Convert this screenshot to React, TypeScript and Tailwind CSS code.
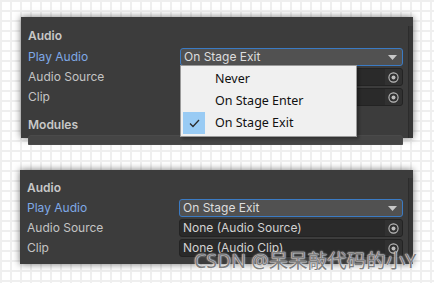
import React from "react";

const font = { fontFamily: "Inter, 'Noto Sans', sans-serif" };

function TargetIcon() {
  return (
    <svg width="11" height="11" viewBox="0 0 11 11">
      <circle cx="5.5" cy="5.5" r="4.6" fill="none" stroke="#bdbdbd" strokeWidth="1.1" />
      <circle cx="5.5" cy="5.5" r="2" fill="#bdbdbd" />
    </svg>
  );
}

function Label({ children, active }: { children: React.ReactNode; active?: boolean }) {
  return (
    <div className={`w-[152px] shrink-0 text-[12px] ${active ? "text-[#7fa9e6]" : "text-[#c4c4c4]"}`}>
      {children}
    </div>
  );
}

function Dropdown({ value, open }: { value: string; open?: boolean }) {
  return (
    <div className="relative flex-1">
      <div className="flex h-[18px] items-center justify-between rounded-[3px] border border-[#3b7bc4] bg-[#515151] pl-[3px] pr-[5px] text-[12px] text-[#dedede]">
        <span>{value}</span>
        <svg width="9" height="5" viewBox="0 0 9 5">
          <path d="M0 0h9L4.5 5z" fill="#c8c8c8" />
        </svg>
      </div>
      {open && <Menu />}
    </div>
  );
}

function ObjectField({ value }: { value: string }) {
  return (
    <div className="flex h-[18px] flex-1 items-center overflow-hidden rounded-[3px] border border-[#232323] bg-[#2a2a2a] text-[12px] text-[#d2d2d2]">
      <span className="flex-1 pl-[3px]">{value}</span>
      <div className="flex h-full w-[17px] items-center justify-center bg-[#313131]">
        <TargetIcon />
      </div>
    </div>
  );
}

function Menu() {
  const items = ["Never", "On Stage Enter", "On Stage Exit"];
  return (
    <div
      className="absolute left-0 top-[17px] z-10 w-[177px] border border-[#9a9a9a] bg-[#f0f0f0] px-[2px] py-[2px] shadow-[2px_2px_3px_rgba(0,0,0,0.3)]"
      style={{ fontFamily: "'Noto Sans', 'Open Sans', sans-serif" }}
    >
      {items.map((it, i) => (
        <div key={it} className="flex h-[22px] items-center">
          <div className={`flex h-[22px] w-[22px] items-center justify-center ${i === 2 ? "bg-[#99cbf4]" : ""}`}>
            {i === 2 && (
              <svg width="11" height="9" viewBox="0 0 11 9">
                <path d="M1 4.5l3 3L10 1" fill="none" stroke="#2b2b2b" strokeWidth="1.3" />
              </svg>
            )}
          </div>
          <span className="ml-[10px] text-[12.5px] text-[#111]">{it}</span>
        </div>
      ))}
    </div>
  );
}

function Row({ children }: { children: React.ReactNode }) {
  return <div className="flex h-[20px] items-center">{children}</div>;
}

function Panel({ children, className }: { children: React.ReactNode; className: string }) {
  return (
    <div className={`flex bg-[#3c3c3c] shadow-[0_0_7px_rgba(0,0,0,0.55)] ${className}`}>
      <div className="flex-1 pl-[7px] pr-[5px]">{children}</div>
      <div className="w-[5px] border-l border-[#2c2c2c] bg-[#353535]" />
    </div>
  );
}

export default function App() {
  return (
    <div
      className="relative h-[283px] w-[434px] overflow-hidden bg-white bg-[linear-gradient(to_right,#efefef_2px,transparent_2px),linear-gradient(to_bottom,#efefef_2px,transparent_2px)] bg-size-[10px_10px]"
      style={font}
    >
      <div className="flex flex-col pt-[17px]">
        <Panel className="relative z-10 ml-[21px] h-[121px] w-[392px] pt-[9px]">
          <div className="flex h-[20px] items-center text-[12px] font-semibold text-[#c8c8c8]">Audio</div>
          <div className="mt-[1px]">
            <Row>
              <Label active>Play Audio</Label>
              <Dropdown value="On Stage Exit" open />
            </Row>
            <Row>
              <Label>Audio Source</Label>
              <ObjectField value="None (Audio Source)" />
            </Row>
            <Row>
              <Label>Clip</Label>
              <ObjectField value="None (Audio Clip)" />
            </Row>
          </div>
          <div className="mt-[8px] flex h-[20px] items-center text-[12px] font-semibold text-[#c8c8c8]">Modules</div>
          <div className="h-[10px] rounded-t-[3px] border border-[#4a4a4a] bg-[#454545]" />
        </Panel>

        <Panel className="ml-[20px] mt-[32px] h-[94px] w-[393px] pt-[8px]">
          <div className="flex h-[20px] items-center text-[12px] font-semibold text-[#c8c8c8]">Audio</div>
          <Row>
            <Label active>Play Audio</Label>
            <Dropdown value="On Stage Exit" />
          </Row>
          <Row>
            <Label>Audio Source</Label>
            <ObjectField value="None (Audio Source)" />
          </Row>
          <Row>
            <Label>Clip</Label>
            <ObjectField value="None (Audio Clip)" />
          </Row>
        </Panel>
      </div>

      <div
        className="absolute left-[194px] top-[249px] z-20 text-[19.5px] leading-[24px] text-[#808080] [text-shadow:0_0_2px_#fff,0_0_1px_#fff]"
        style={{ fontFamily: "'Noto Sans', 'Noto Sans CJK SC', sans-serif" }}
      >
        CSDN @呆呆敲代码的小Y
      </div>
    </div>
  );
}
